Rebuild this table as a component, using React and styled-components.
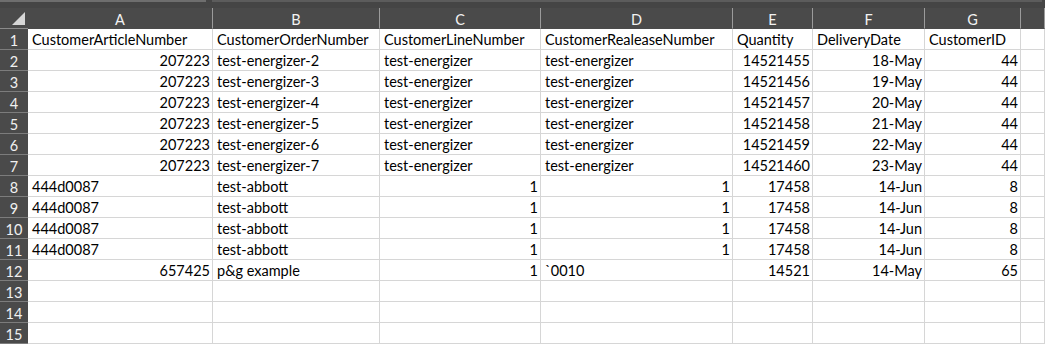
import React from 'react';
import styled, { createGlobalStyle } from 'styled-components';

const GlobalStyle = createGlobalStyle`
  html, body {
    margin: 0;
    padding: 0;
    background: #ffffff;
  }
  body {
    font-family: Lato, "Noto Sans", sans-serif;
  }
`;

const columns = ['A', 'B', 'C', 'D', 'E', 'F', 'G', ''];

// each row: [value, align] per column
const rows = [
  [['CustomerArticleNumber'], ['CustomerOrderNumber'], ['CustomerLineNumber'], ['CustomerRealeaseNumber'], ['Quantity'], ['DeliveryDate'], ['CustomerID']],
  [['207223', 'r'], ['test-energizer-2'], ['test-energizer'], ['test-energizer'], ['14521455', 'r'], ['18-May', 'r'], ['44', 'r']],
  [['207223', 'r'], ['test-energizer-3'], ['test-energizer'], ['test-energizer'], ['14521456', 'r'], ['19-May', 'r'], ['44', 'r']],
  [['207223', 'r'], ['test-energizer-4'], ['test-energizer'], ['test-energizer'], ['14521457', 'r'], ['20-May', 'r'], ['44', 'r']],
  [['207223', 'r'], ['test-energizer-5'], ['test-energizer'], ['test-energizer'], ['14521458', 'r'], ['21-May', 'r'], ['44', 'r']],
  [['207223', 'r'], ['test-energizer-6'], ['test-energizer'], ['test-energizer'], ['14521459', 'r'], ['22-May', 'r'], ['44', 'r']],
  [['207223', 'r'], ['test-energizer-7'], ['test-energizer'], ['test-energizer'], ['14521460', 'r'], ['23-May', 'r'], ['44', 'r']],
  [['444d0087'], ['test-abbott'], ['1', 'r'], ['1', 'r'], ['17458', 'r'], ['14-Jun', 'r'], ['8', 'r']],
  [['444d0087'], ['test-abbott'], ['1', 'r'], ['1', 'r'], ['17458', 'r'], ['14-Jun', 'r'], ['8', 'r']],
  [['444d0087'], ['test-abbott'], ['1', 'r'], ['1', 'r'], ['17458', 'r'], ['14-Jun', 'r'], ['8', 'r']],
  [['444d0087'], ['test-abbott'], ['1', 'r'], ['1', 'r'], ['17458', 'r'], ['14-Jun', 'r'], ['8', 'r']],
  [['657425', 'r'], ['p&g example'], ['1', 'r'], ['`0010'], ['14521', 'r'], ['14-May', 'r'], ['65', 'r']],
  [],
  [],
  [],
];

const App = () => {
  return (
    <>
      <GlobalStyle />
      <Window>
        <TopStrip>
          <ScrollPiece $w={206} />
          <ScrollPiece $w={830} $dim />
        </TopStrip>
        <Sheet>
          <Corner>
            <Triangle />
          </Corner>
          {columns.map((c, i) => (
            <ColHead key={'h' + i}>{c}</ColHead>
          ))}
          {rows.map((r, ri) => (
            <React.Fragment key={ri}>
              <RowHead>{ri + 1}</RowHead>
              {columns.map((c, ci) => {
                const cell = r[ci] || [];
                return (
                  <Cell key={ci} $right={cell[1] === 'r'}>
                    {cell[0] || ''}
                  </Cell>
                );
              })}
            </React.Fragment>
          ))}
        </Sheet>
      </Window>
    </>
  );
};

const Window = styled.div`
  width: 1045px;
  height: 345px;
  overflow: hidden;
  background: #ffffff;
`;

const TopStrip = styled.div`
  display: flex;
  gap: 6px;
  height: 8px;
  background: #454545;
`;

const ScrollPiece = styled.div`
  width: ${(p) => p.$w}px;
  height: 2px;
  background: ${(p) => (p.$dim ? '#5c5c5c' : '#6e6e6e')};
`;

const Sheet = styled.div`
  display: grid;
  grid-template-columns: 28px 185px 167px 161px 192px 80px 112px 96px 1fr;
  grid-auto-rows: 21px;
`;

const Corner = styled.div`
  position: relative;
  background: #4a4a4a;
  border-bottom: 1px solid #8a8a8a;
  box-sizing: border-box;
`;

const Triangle = styled.div`
  position: absolute;
  left: 12px;
  top: 4px;
  width: 0;
  height: 0;
  border-left: 13px solid transparent;
  border-bottom: 13px solid #d6d6d6;
`;

const ColHead = styled.div`
  background: #4a4a4a;
  color: #f2f2f2;
  font-size: 14.5px;
  box-sizing: border-box;
  border-right: 1px solid #9b9b9b;
  border-bottom: 1px solid #4a4a4a;
  display: flex;
  align-items: flex-end;
  justify-content: center;
  padding-bottom: 1px;
  line-height: 1;
`;

const RowHead = styled.div`
  background: #4a4a4a;
  color: #f0f0f0;
  font-size: 14.5px;
  box-sizing: border-box;
  border-bottom: 1px solid #7c7c7c;
  display: flex;
  align-items: flex-end;
  justify-content: center;
  padding-bottom: 1px;
  line-height: 1;
`;

const Cell = styled.div`
  box-sizing: border-box;
  border-right: 1px solid #d6d6d6;
  border-bottom: 1px solid #d6d6d6;
  color: #000000;
  font-size: 14.5px;
  line-height: 1;
  display: flex;
  align-items: flex-end;
  justify-content: ${(p) => (p.$right ? 'flex-end' : 'flex-start')};
  padding: 0 2px 2px 4px;
  white-space: nowrap;
  overflow: hidden;
`;

export default App;
